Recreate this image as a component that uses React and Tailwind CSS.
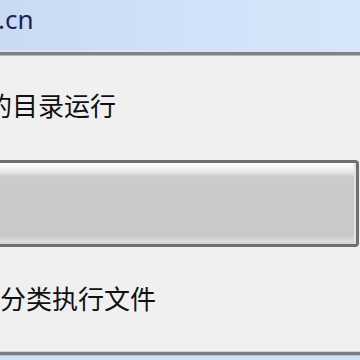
import React from "react";

const cjk = { fontFamily: '"Noto Sans CJK SC", "Noto Sans", sans-serif' };

function App() {
  return (
    <div className="w-[360px] h-[360px] overflow-hidden flex flex-col bg-[#f0f0f0]">
      {/* title bar */}
      <div className="h-[50px] shrink-0 bg-[linear-gradient(to_right,#c8dbf2,#d0e3f8_60%,#d5e7fb)] pt-[6px]">
        <div
          className="ml-[-2px] text-[26px] leading-none text-[#1b2456]"
          style={{ fontFamily: '"Noto Sans", "Open Sans", sans-serif' }}
        >
          .cn
        </div>
      </div>
      <div className="h-[2px] shrink-0 bg-[#dae4ee]" />
      <div className="h-[3px] shrink-0 bg-[#7d838a]" />
      <div className="h-[1px] shrink-0 bg-[#b4b8bc]" />

      {/* body */}
      <div className="flex-1 flex flex-col" style={cjk}>
        <div className="mt-[36px] ml-[-14px] text-[26px] leading-none text-[#111] whitespace-nowrap">
          的目录运行
        </div>

        <div className="mt-[42px] ml-[-8px] mr-[1px] h-[87px] shrink-0 rounded-[4px] border-[3px] border-[#6f6f6f]">
          <div className="h-full rounded-[2px] border-r-[2px] border-[#e2e2e2] bg-[linear-gradient(to_bottom,#fdfdfd_0px,#f4f4f4_5px,#e6e6e6_9px,#cbcbcb_14px,#c9c9c9_73px,#dcdcdc_78px,#d4d4d4_81px)]" />
        </div>

        <div className="mt-[38px] ml-[0px] text-[26px] leading-none text-[#111] whitespace-nowrap">
          分类执行文件
        </div>
      </div>

      {/* bottom edge */}
      <div className="h-[1px] shrink-0 bg-[#d2d2d2]" />
      <div className="h-[3px] shrink-0 bg-[#7a7e84]" />
      <div className="h-[1px] shrink-0 bg-[#b4c0cc]" />
      <div className="h-[4px] shrink-0 bg-[#d2e3f8]" />
    </div>
  );
}

export default App;
